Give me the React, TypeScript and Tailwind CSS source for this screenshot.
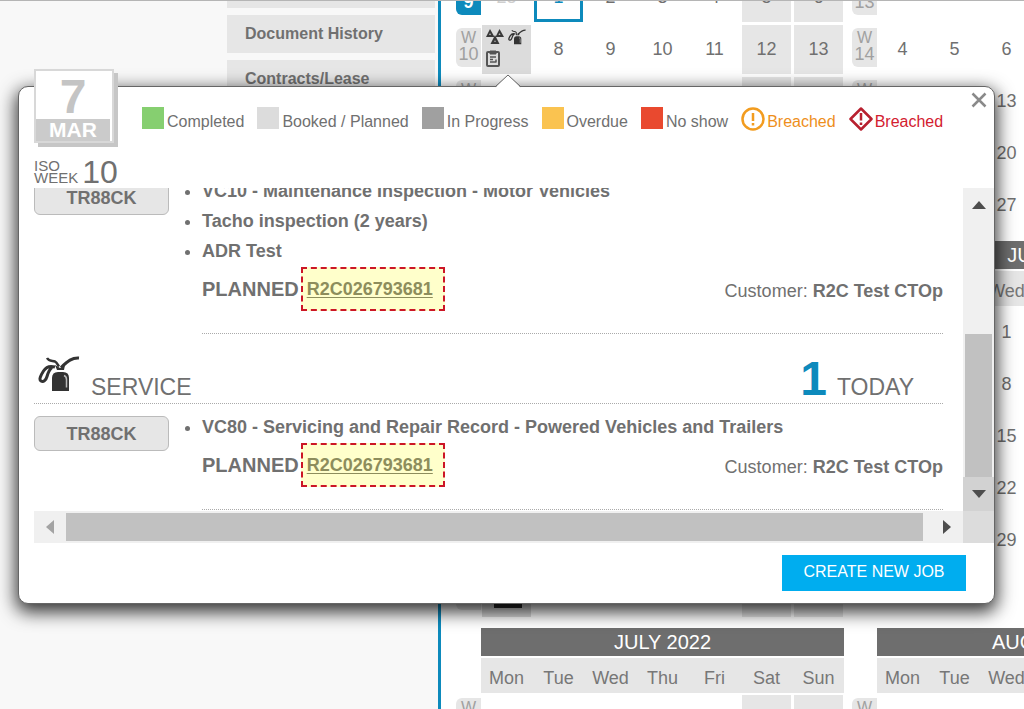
import React from 'react';

type Month = {
  name: string;
  firstWeek: number;
  offset: number;
  days: number;
  rows: number;
  lead?: number[];
  today?: number;
  events?: number[];
};

const WEEKDAYS = ['Mon', 'Tue', 'Wed', 'Thu', 'Fri', 'Sat', 'Sun'];

const MONTHS: Month[] = [
  { name: 'MARCH 2022', firstWeek: 9, offset: 1, days: 31, rows: 5, lead: [28], today: 1, events: [7] },
  { name: 'APRIL 2022', firstWeek: 13, offset: 4, days: 30, rows: 5 },
  { name: 'MAY 2022', firstWeek: 17, offset: 6, days: 31, rows: 6, events: [30] },
  { name: 'JUNE 2022', firstWeek: 22, offset: 2, days: 30, rows: 5 },
  { name: 'JULY 2022', firstWeek: 26, offset: 4, days: 31, rows: 1 },
  { name: 'AUGUST 2022', firstWeek: 31, offset: 0, days: 31, rows: 1 },
];

const MENU = ['Vehicle Details', 'Document History', 'Contracts/Lease'];

const LEGEND = [
  { label: 'Completed', color: 'bg-[#86cf70]' },
  { label: 'Booked / Planned', color: 'bg-[#dcdcdc]' },
  { label: 'In Progress', color: 'bg-[#a0a0a0]' },
  { label: 'Overdue', color: 'bg-[#fac350]' },
  { label: 'No show', color: 'bg-[#e9492f]' },
];

const OilCanIcon = ({ className }: { className: string }) => (
  <svg viewBox="0 0 42 36" className={className} fill="none" aria-hidden="true">
    <path d="M9 2c2 3.500 5 2.500 8 3.500 2 1 2.500 3 4 5" stroke="#333" strokeWidth="2.500" />
    <path d="M41 2c-7-.5-11 3-18 9.500" stroke="#333" strokeWidth="3" />
    <path d="M17 9l5 3 5-3-1 5h-7z" fill="#333" />
    <path d="M17 11c-5-1.500-9 0-11.500 4S.5 23.500 3 25s5-1 6-4.500 2-7 5-9" stroke="#333" strokeWidth="3" />
    <path d="M14 35V22q0-6 6-6h5q6 0 6 6v13z" fill="#333" />
    <path d="M26 19.500q2.500 1 2.500 4v8" stroke="#bbb" strokeWidth="1.500" />
  </svg>
);

const InspectionIcon = () => (
  <svg viewBox="0 0 18 16" className="h-4 w-[18px]" aria-hidden="true">
    <path d="M4 0l4.500 8H0zM13.500 0L18 8H9.500z" fill="#3a3a3a" />
    <path d="M9 6l4.500 9h-9z" fill="#3a3a3a" />
    <path d="M4 4l1 2H3zM13.500 4l1 2h-2zM9 11l.8 2H8.200z" fill="#bbb" />
  </svg>
);

const ClipboardIcon = () => (
  <svg viewBox="0 0 14 18" className="h-[18px] w-3.5" fill="none" stroke="#555" aria-hidden="true">
    <rect x="1" y="3" width="12" height="14" rx="1" strokeWidth="2" />
    <path d="M4 2h6v3H4z" fill="#555" />
    <path d="M4 8h6M4 10.500h3M4 13h6M10 10.500v3" strokeWidth="1.500" />
  </svg>
);

const WeekLabel = ({ week, active }: { week: number; active: boolean }) => (
  <div
    className={`mt-[3px] flex h-[39px] w-[25px] flex-col items-center rounded-l-md pt-0.5 leading-4 ${
      active ? 'bg-[#0d8abc] font-bold text-white' : 'bg-[#e6e6e6] text-[#a0a0a0]'
    }`}
  >
    <span className="text-base leading-4">W</span>
    <span className="text-lg leading-4">{week}</span>
  </div>
);

const DayCell = ({ month, row, col }: { month: Month; row: number; col: number }) => {
  const index = row * 7 + col;
  const day = index - month.offset + 1;
  const base = 'flex h-[49px] w-[49px] items-center justify-center pb-0.5 text-lg';

  if (day < 1) {
    return <div className={`${base} text-[#cfcfcf] ${col > 4 ? 'bg-[#e6e6e6]' : ''}`}>{month.lead?.[index]}</div>;
  }
  if (month.events?.includes(day)) {
    return (
      <div className="flex h-[49px] w-[49px] flex-wrap content-start items-center gap-x-1 gap-y-1 bg-[#dcdcdc] px-1 pt-1">
        {day === 7 ? (
          <>
            <InspectionIcon />
            <OilCanIcon className="h-4 w-[18px]" />
            <ClipboardIcon />
          </>
        ) : (
          <div className="ml-2 mt-4 h-5 w-7 bg-[#2b2b2b]" />
        )}
      </div>
    );
  }
  return (
    <div
      className={`${base} ${col > 4 ? 'bg-[#e6e6e6]' : ''} ${
        month.today === day ? 'border-[3px] border-[#0d8abc] text-[#0d8abc]' : 'text-[#707070]'
      }`}
    >
      {day <= month.days ? day : ''}
    </div>
  );
};

const MonthBlock = ({ month }: { month: Month }) => (
  <section className="w-[388px]">
    <div className="ml-[25px]">
      <h2 className="mb-0.5 h-7 bg-[#6e6e6e] text-center text-xl leading-7 text-white">{month.name}</h2>
      <div className="mb-0.5 flex h-[35px] gap-[3px] bg-[#e6e6e6] px-px">
        {WEEKDAYS.map((d) => (
          <div key={d} className="flex w-[49px] items-center justify-center pt-1 text-lg text-[#777]">
            {d}
          </div>
        ))}
      </div>
    </div>
    <div className="flex flex-col gap-[3px]">
      {Array.from({ length: month.rows }, (_, row) => (
        <div key={row} className="flex">
          <WeekLabel week={month.firstWeek + row} active={month.firstWeek + row === 9} />
          <div className="ml-px flex gap-[3px]">
            {WEEKDAYS.map((d, col) => (
              <DayCell key={d} month={month} row={row} col={col} />
            ))}
          </div>
        </div>
      ))}
    </div>
  </section>
);

const Job = ({ items }: { items: string[] }) => (
  <div className="flex shrink-0">
    <div className="w-[168px] shrink-0 pt-1">
      <button className="h-[35px] w-[135px] rounded-md border border-[#bbb] bg-[#e6e6e6] text-lg leading-none font-bold">
        TR88CK
      </button>
    </div>
    <div className="grow border-b border-dotted border-[#aaa] pb-[22px]">
      <ul className="mb-px list-outside list-disc text-lg leading-[30px] font-bold">
        {items.map((item) => (
          <li key={item}>{item}</li>
        ))}
      </ul>
      <div className="flex h-11 items-center">
        <span className="text-xl font-bold">PLANNED</span>
        <span className="ml-0.5 flex h-11 w-36 items-center border-2 border-dashed border-[#cc1626] bg-[#ffffcb] pl-1">
          <a href="#job" className="text-lg font-bold text-[#8d8d5c] underline underline-offset-2">
            R2C026793681
          </a>
        </span>
        <span className="ml-auto pt-1 text-lg">
          Customer: <b>R2C Test CTOp</b>
        </span>
      </div>
    </div>
  </div>
);

const Arrow = ({ points, color }: { points: string; color: string }) => (
  <svg viewBox="0 0 14 14" className="h-3.5 w-3.5" aria-hidden="true">
    <polygon points={points} fill={color} />
  </svg>
);

const JobDialog = () => (
  <div role="dialog" aria-label="7 March" className="relative rounded-[10px] border border-[#666] bg-white shadow-[0_6px_18px_2px_rgba(0,0,0,0.8)]">
    {/* pointer towards the selected day */}
    <svg viewBox="0 0 26 14" className="absolute -top-[13px] left-[476px] h-3.5 w-[26px]" aria-hidden="true">
      <path d="M0 14L13 1l13 13z" fill="#fff" />
      <path d="M0 13L13 1l13 12" fill="none" stroke="#666" />
    </svg>
    <button aria-label="Close" className="absolute top-1 right-1.5 p-px">
      <svg viewBox="0 0 16 16" className="h-4 w-4" stroke="#8a8a8a" strokeWidth="2.500" aria-hidden="true">
        <path d="M1.500 1.500l13 13M14.500 1.500l-13 13" />
      </svg>
    </button>

    <header className="flex h-[101px] items-start pl-[15px]">
      <div className="-mt-[18px] w-[108px] shrink-0">
        <div className="flex h-[74px] w-20 flex-col border-2 border-[#d8d8d8] bg-white pr-0.5 text-center font-bold shadow-[4px_4px_0_#c6c6c6]">
          <div className="h-12 pt-0.5 text-5xl leading-[48px] text-[#c4c4c4]">7</div>
          <div className="grow bg-[#cbcbcb] text-[21px] leading-[22px] text-white">MAR</div>
        </div>
        <div className="mt-[15px] flex items-center gap-1">
          <div className="text-[15px] leading-3">
            ISO
            <br />
            WEEK
          </div>
          <div className="text-[32px] leading-7">10</div>
        </div>
      </div>
      <ul className="flex gap-[13px] pt-5 text-base leading-[22px] whitespace-nowrap">
        {LEGEND.map((item) => (
          <li key={item.label} className="flex gap-[3px]">
            <span className={`h-[22px] w-[22px] ${item.color}`} />
            <span className="pt-1">{item.label}</span>
          </li>
        ))}
        <li className="flex gap-0.5 text-[#ee8f1c]">
          <svg viewBox="0 0 24 24" className="h-6 w-6" fill="none" stroke="#f29c1f" aria-hidden="true">
            <circle cx="12" cy="12" r="10.500" strokeWidth="2.500" />
            <path d="M12 6v8M12 16v2.500" strokeWidth="2.500" />
          </svg>
          <span className="pt-1">Breached</span>
        </li>
        <li className="flex gap-0.5 text-[#d3202f]">
          <svg viewBox="0 0 24 24" className="h-6 w-6" fill="none" stroke="#b8202f" aria-hidden="true">
            <path d="M12 1.500L22.500 12 12 22.500 1.500 12z" strokeWidth="2.500" strokeLinejoin="round" />
            <path d="M12 6v7.500M12 15.500V18" strokeWidth="2.500" />
          </svg>
          <span className="pt-1">Breached</span>
        </li>
      </ul>
    </header>

    <div className="flex pl-[15px]">
      {/* job list, scrolled to its end */}
      <div className="flex h-[323px] grow flex-col justify-end overflow-hidden pr-5 pb-px">
        <Job items={['VC10 - Maintenance Inspection - Motor Vehicles', 'Tacho inspection (2 years)', 'ADR Test']} />
        <div className="mb-2 flex h-[70px] shrink-0 items-end border-b border-dotted border-[#aaa] pr-[29px] pl-1">
          <OilCanIcon className="mb-[11px] h-9 w-[42px]" />
          <h3 className="ml-[11px] text-[23px] leading-8">SERVICE</h3>
          <p className="ml-auto flex items-baseline gap-2.5 text-[23px] leading-8">
            <b className="text-5xl leading-8 text-[#0d8abc]">1</b>TODAY
          </p>
        </div>
        <Job items={['VC80 - Servicing and Repair Record - Powered Vehicles and Trailers']} />
      </div>
      <div className="flex w-[31px] shrink-0 flex-col bg-[#f0f0f0]">
        <button aria-label="Scroll up" className="flex h-[34px] items-center justify-center">
          <Arrow points="0,11 14,11 7,3" color="#4d4d4d" />
        </button>
        <div className="mx-0.5 mt-auto h-[143px] bg-[#c1c1c1]" />
        <button aria-label="Scroll down" className="flex h-[34px] items-center justify-center bg-[#d2d2d2]">
          <Arrow points="0,3 14,3 7,11" color="#4d4d4d" />
        </button>
      </div>
    </div>
    <div className="flex h-8 pl-[15px]">
      <div className="flex grow bg-[#f0f0f0]">
        <button aria-label="Scroll left" className="flex w-8 items-center justify-center">
          <Arrow points="11,0 11,14 3,7" color="#a3a3a3" />
        </button>
        <div className="my-0.5 grow bg-[#c1c1c1]" />
        <button aria-label="Scroll right" className="flex w-10 items-center justify-center pl-2">
          <Arrow points="3,0 3,14 11,7" color="#4d4d4d" />
        </button>
      </div>
      <div className="w-[31px] bg-[#dcdcdc]" />
    </div>

    <footer className="flex justify-end pt-3 pr-7 pb-3">
      <button className="h-9 w-[184px] bg-[#00adef] pb-0.5 text-base text-white">CREATE NEW JOB</button>
    </footer>
  </div>
);

export default function App() {
  return (
    <div className="relative h-screen overflow-hidden border-t border-[#b5b5b5] bg-white font-['Liberation_Sans',Arial,sans-serif] text-[#707070]">
      <div className="flex h-full">
        <nav className="flex w-[438px] shrink-0 justify-end bg-[#f8f8f8] pr-[3px]">
          <ul className="-mt-[31px] flex w-[208px] flex-col gap-[7px]">
            {MENU.map((label) => (
              <li key={label}>
                <a href="#menu" className="flex h-[38px] items-center bg-[#e6e6e6] pl-[18px] text-base font-bold">
                  {label}
                </a>
              </li>
            ))}
          </ul>
        </nav>
        <main className="grow overflow-hidden border-l-[3px] border-[#0d8abc] pl-[15px]">
          <div className="-mt-[95px] grid w-max grid-cols-2 gap-x-2 gap-y-[11px]">
            {MONTHS.map((month) => (
              <MonthBlock key={month.name} month={month} />
            ))}
          </div>
        </main>
      </div>
      <div className="absolute inset-x-0 top-[85px] pr-[29px] pl-[18px]">
        <JobDialog />
      </div>
    </div>
  );
}
